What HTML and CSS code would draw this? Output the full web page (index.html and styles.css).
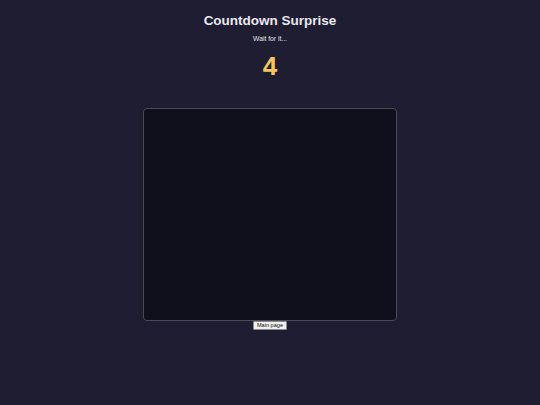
FILE: index.html
```html
<!DOCTYPE html>
<html>
<head>
<meta charset="utf-8">
<link rel="stylesheet" href="styles.css">
</head>
<body>
<div class="page">
  <h1 class="title">Countdown Surprise</h1>
  <p class="hint">Wait for it...</p>
  <div class="count">4</div>
  <div class="stage">
    <div class="canvas"></div>
    <button class="back">Main page</button>
  </div>
</div>
</body>
</html>
```
FILE: styles.css
```css
html, body {
  margin: 0;
  padding: 0;
  background: #1e1d31;
}
body {
  font-family: "Liberation Sans", Arial, sans-serif;
  color: #e8e8ee;
}
.page {
  padding: 3.4px;
  text-align: center;
}
.title {
  font-size: 13.5px;
  font-weight: bold;
  line-height: 15.5px;
  margin: 10px 0 6px 0;
  color: #e9e9ef;
}
.hint {
  font-size: 6.75px;
  line-height: 7.75px;
  margin: 0 0 8.5px 0;
  color: #e4e4ea;
}
.count {
  font-size: 26px;
  font-weight: bold;
  line-height: 30px;
  color: #f6c65e;
}
.stage {
  margin-top: 26.5px;
  display: flex;
  flex-direction: column;
  align-items: center;
}
.canvas {
  width: 252px;
  height: 211px;
  background: #10101d;
  border: 1.5px solid #4b4b58;
  border-radius: 4px;
}
.back {
  margin-top: 0;
  font-family: "Liberation Sans", Arial, sans-serif;
  font-size: 5.6px;
  line-height: 6.5px;
  padding: 0.5px 2.5px;
  background: #f0f0f0;
  color: #111;
  border: 0.5px solid #8a8a8a;
  border-radius: 1px;
}
```
